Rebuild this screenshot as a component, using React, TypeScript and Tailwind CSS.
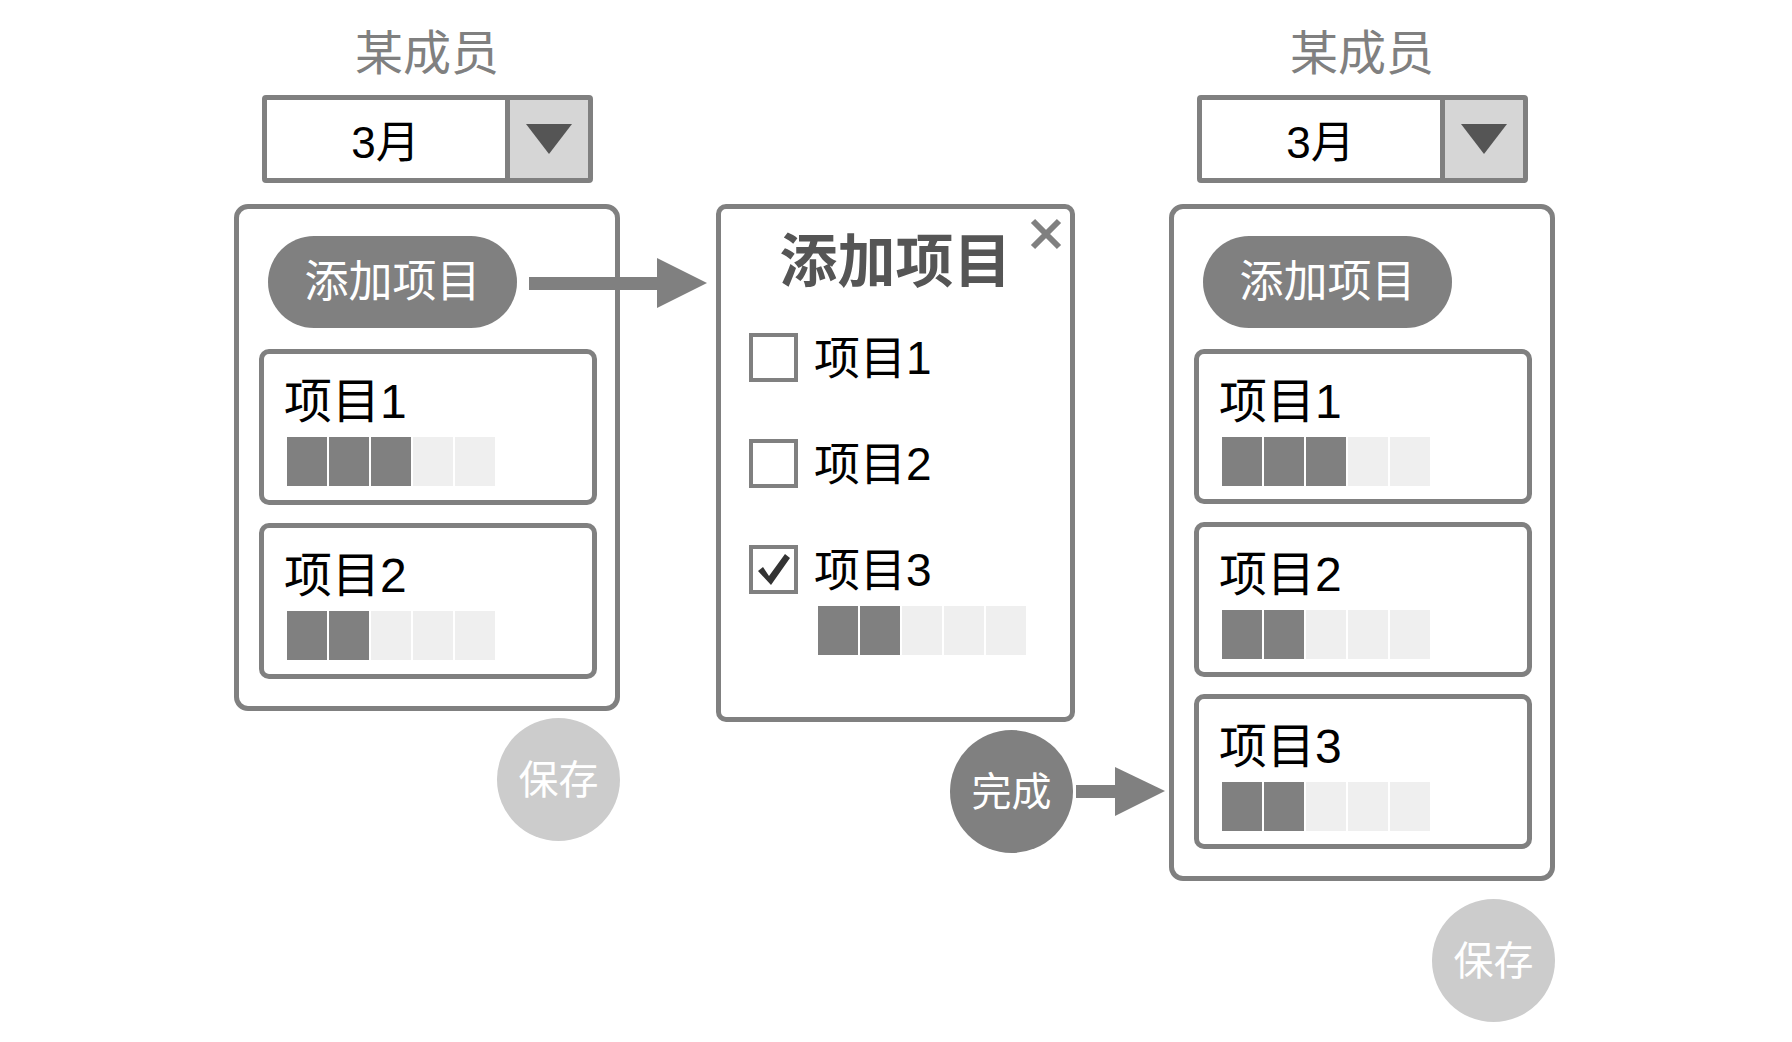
const font = "font-['Liberation_Sans','Noto_Sans_CJK_SC',sans-serif]";

function Bar({ filled }: { filled: number }) {
  return (
    <div className="flex gap-[2px]">
      {[0, 1, 2, 3, 4].map((i) => (
        <div key={i} className={`w-[40px] h-[49px] ${i < filled ? "bg-[#808080]" : "bg-[#efefef]"}`} />
      ))}
    </div>
  );
}

function ItemCard({ name, filled, cls }: { name: string; filled: number; cls: string }) {
  return (
    <div className={`${cls} w-[338px] border-[5px] border-[#808080] rounded-[10px] pl-[23px] pt-[24px]`}>
      <div className="text-[48px] leading-none text-black -ml-[3px]">{name}</div>
      <div className="mt-[11px]">
        <Bar filled={filled} />
      </div>
    </div>
  );
}

interface Item {
  name: string;
  filled: number;
  cls: string;
}

function MemberColumn({ items, saveGap, ml }: { items: Item[]; saveGap: string; ml: string }) {
  return (
    <div className={`${ml} w-[386px] flex flex-col items-center`}>
      <div className="text-[48px] leading-none text-[#808080]">某成员</div>
      {/* month select */}
      <div className="mt-[17px] w-[331px] h-[88px] border-[5px] border-[#808080] rounded-[4px] flex">
        <div className="flex-1 flex items-center justify-center pt-[8px] text-[44px] leading-none text-black">3月</div>
        <div className="w-[5px] bg-[#808080]" />
        <div className="w-[78px] bg-[#d6d6d6] flex items-center justify-center">
          <svg width="46" height="30" viewBox="0 0 46 30">
            <polygon points="0,0 46,0 23,30" fill="#555555" />
          </svg>
        </div>
      </div>
      <div className="mt-[21px] w-[386px] border-[5px] border-[#808080] rounded-[14px] flex flex-col items-start pl-[20px] pt-[27px] pb-[27px]">
        <div className="ml-[9px] w-[249px] h-[92px] rounded-full bg-[#808080] text-white text-[44px] leading-none flex items-center justify-center">
          添加项目
        </div>
        {items.map((it) => (
          <ItemCard key={it.name} name={it.name} filled={it.filled} cls={it.cls} />
        ))}
      </div>
      <div className={`${saveGap} self-end w-[123px] h-[123px] rounded-full bg-[#cccccc] text-white text-[40px] leading-none flex items-center justify-center`}>
        保存
      </div>
    </div>
  );
}

function CheckRow({ name, checked, gap }: { name: string; checked?: boolean; gap: string }) {
  return (
    <div className={`${gap} flex items-center h-[49px]`}>
      <div className="w-[49px] h-[49px] border-[4px] border-[#808080] flex items-center justify-center">
        {checked && (
          <svg width="41" height="41" viewBox="0 0 41 41">
            <path d="M5 22 L10 18 L16 27 L32 5 L37 9 L18 36 Z" fill="#333333" />
          </svg>
        )}
      </div>
      <div className="ml-[16px] text-[46px] leading-none text-black">{name}</div>
    </div>
  );
}

export default function App() {
  return (
    <div className={`${font} relative w-[1792px] h-[1042px] bg-white flex items-start pt-[30px] overflow-hidden`}>
      <MemberColumn
        ml="ml-[234px]"
        saveGap="mt-[7px]"
        items={[
          { name: "项目1", filled: 3, cls: "mt-[21px] h-[156px]" },
          { name: "项目2", filled: 2, cls: "mt-[18px] h-[156px]" },
        ]}
      />

      {/* add-item dialog */}
      <div className="ml-[96px] mt-[174px] flex flex-col items-end">
        <div className="relative w-[359px] h-[518px] border-[5px] border-[#808080] rounded-[10px] flex flex-col px-[28px] pt-[24px]">
          <svg className="absolute top-[9px] right-[8px]" width="32" height="32" viewBox="0 0 32 32">
            <path d="M3 3 L29 29 M29 3 L3 29" stroke="#808080" strokeWidth="6" />
          </svg>
          <div className="self-center text-[58px] font-bold leading-none text-[#555555]">添加项目</div>
          <CheckRow name="项目1" gap="mt-[42px]" />
          <CheckRow name="项目2" gap="mt-[57px]" />
          <CheckRow name="项目3" gap="mt-[57px]" checked />
          <div className="mt-[12px] ml-[69px]">
            <Bar filled={2} />
          </div>
        </div>
        <div className="mt-[8px] mr-[2px] w-[123px] h-[123px] rounded-full bg-[#808080] text-white text-[40px] leading-none flex items-center justify-center">
          完成
        </div>
      </div>

      <MemberColumn
        ml="ml-[94px]"
        saveGap="mt-[18px]"
        items={[
          { name: "项目1", filled: 3, cls: "mt-[21px] h-[155px]" },
          { name: "项目2", filled: 2, cls: "mt-[18px] h-[155px]" },
          { name: "项目3", filled: 2, cls: "mt-[17px] h-[155px]" },
        ]}
      />

      {/* flow arrows */}
      <svg className="absolute left-0 top-0 pointer-events-none" width="1792" height="1042">
        <rect x="529" y="277" width="129" height="13" fill="#808080" />
        <polygon points="657,258 707,283 657,308" fill="#808080" />
        <rect x="1076" y="785" width="40" height="13" fill="#808080" />
        <polygon points="1115,767 1165,791 1115,816" fill="#808080" />
      </svg>
    </div>
  );
}
